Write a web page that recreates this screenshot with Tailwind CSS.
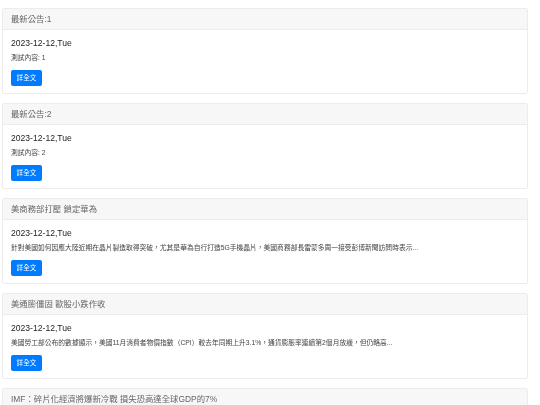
<!DOCTYPE html>
<html lang="zh-TW">
<head>
<meta charset="utf-8">
<script src="https://cdn.jsdelivr.net/npm/@tailwindcss/browser@4"></script>
</head>
<body class="bg-white overflow-hidden font-['Liberation_Sans','Noto_Sans_CJK_TC',sans-serif] text-[#212529]">
<main class="h-[405px] overflow-hidden flex flex-col gap-[9px] pt-[8px] pl-[2px] w-[528px] blur-[0.25px]">
  <section class="shrink-0 h-[86px] border border-[#ececec] rounded-[2px] flex flex-col">
    <h2 class="h-[21px] shrink-0 bg-[#f7f7f7] border-b border-[#ececec] flex items-center px-[8px] text-[8.4px] text-[#666]">最新公告:1</h2>
    <div class="px-[8px] pt-[7px]">
      <p class="text-[8.6px] leading-[12px]">2023-12-12,Tue</p>
      <p class="text-[6.77px] leading-[8px] mt-[5px] text-[#444]">測試內容: 1</p>
      <button class="block mt-[8px] w-[31px] h-[16px] rounded-[2px] bg-[#007bff] text-white text-[6.6px] leading-[16px] text-center">詳全文</button>
    </div>
  </section>
  <section class="shrink-0 h-[86px] border border-[#ececec] rounded-[2px] flex flex-col">
    <h2 class="h-[21px] shrink-0 bg-[#f7f7f7] border-b border-[#ececec] flex items-center px-[8px] text-[8.4px] text-[#666]">最新公告:2</h2>
    <div class="px-[8px] pt-[7px]">
      <p class="text-[8.6px] leading-[12px]">2023-12-12,Tue</p>
      <p class="text-[6.77px] leading-[8px] mt-[5px] text-[#444]">測試內容: 2</p>
      <button class="block mt-[8px] w-[31px] h-[16px] rounded-[2px] bg-[#007bff] text-white text-[6.6px] leading-[16px] text-center">詳全文</button>
    </div>
  </section>
  <section class="shrink-0 h-[86px] border border-[#ececec] rounded-[2px] flex flex-col">
    <h2 class="h-[21px] shrink-0 bg-[#f7f7f7] border-b border-[#ececec] flex items-center px-[8px] text-[8.4px] text-[#666]">美商務部打壓 鎖定華為</h2>
    <div class="px-[8px] pt-[7px]">
      <p class="text-[8.6px] leading-[12px]">2023-12-12,Tue</p>
      <p class="text-[6.77px] leading-[8px] mt-[5px] text-[#444]">針對美國如何因應大陸近期在晶片製造取得突破，尤其是華為自行打造5G手機晶片，美國商務部長雷蒙多周一接受彭博新聞訪問時表示...</p>
      <button class="block mt-[8px] w-[31px] h-[16px] rounded-[2px] bg-[#007bff] text-white text-[6.6px] leading-[16px] text-center">詳全文</button>
    </div>
  </section>
  <section class="shrink-0 h-[86px] border border-[#ececec] rounded-[2px] flex flex-col">
    <h2 class="h-[21px] shrink-0 bg-[#f7f7f7] border-b border-[#ececec] flex items-center px-[8px] text-[8.4px] text-[#666]">美通膨僵固 歐股小跌作收</h2>
    <div class="px-[8px] pt-[7px]">
      <p class="text-[8.6px] leading-[12px]">2023-12-12,Tue</p>
      <p class="text-[6.77px] leading-[8px] mt-[5px] text-[#444]">美國勞工部公布的數據顯示，美國11月消費者物價指數（CPI）較去年同期上升3.1%，通貨膨脹率連續第2個月放緩，但仍略高...</p>
      <button class="block mt-[8px] w-[31px] h-[16px] rounded-[2px] bg-[#007bff] text-white text-[6.6px] leading-[16px] text-center">詳全文</button>
    </div>
  </section>
  <section class="shrink-0 h-[86px] border border-[#ececec] rounded-[2px] flex flex-col">
    <h2 class="h-[21px] shrink-0 bg-[#f7f7f7] border-b border-[#ececec] flex items-center px-[8px] text-[8.4px] text-[#666]">IMF：碎片化經濟將爆新冷戰 損失恐高達全球GDP的7%</h2>
  </section>
</main>
</body>
</html>
